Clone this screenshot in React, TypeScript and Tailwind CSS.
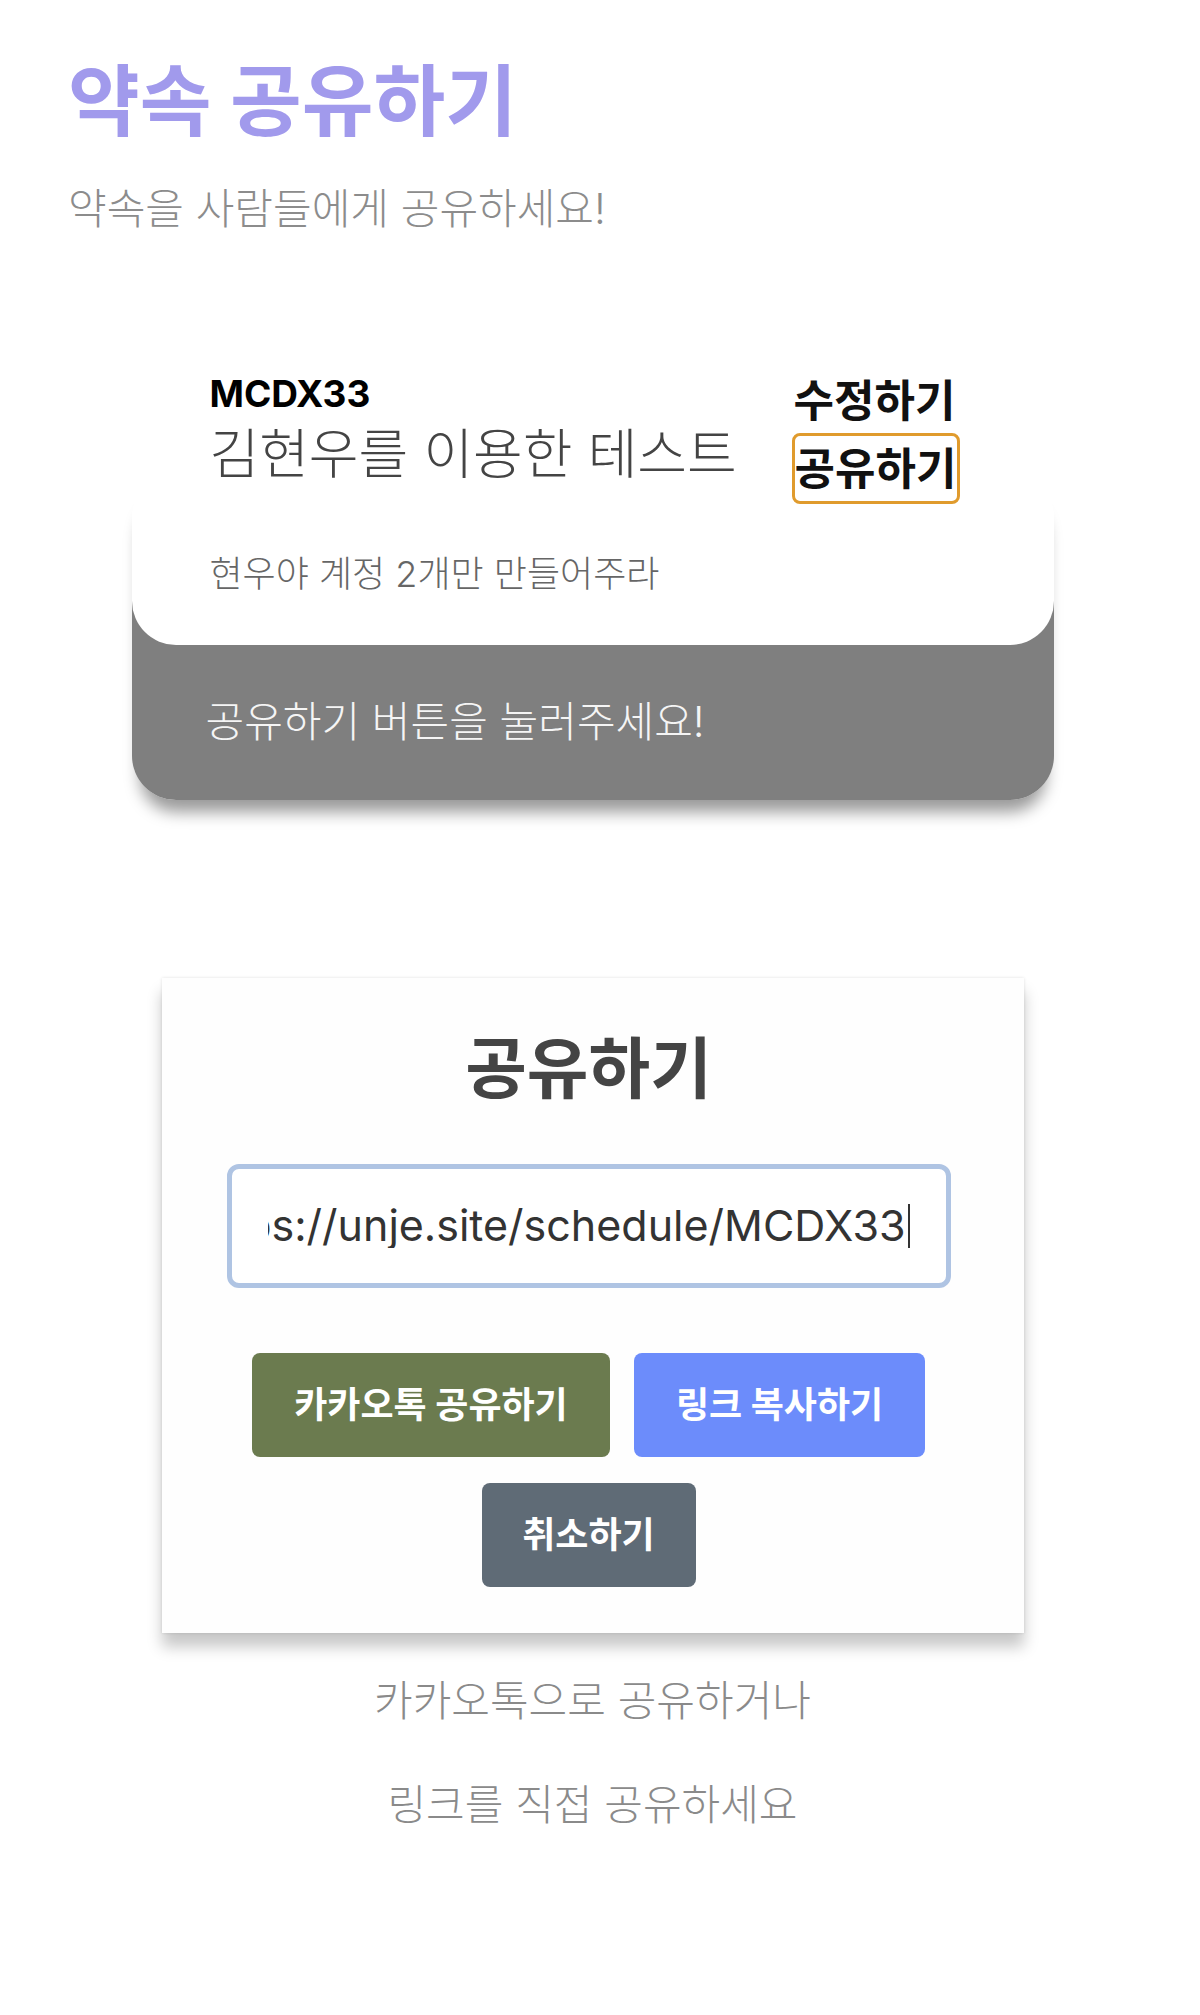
export default function App() {
  return (
    <div className="min-h-[2015px] bg-white font-['Inter','Noto_Sans_CJK_KR',sans-serif]">
      <div className="w-[1185px] pb-[100px]">
        <header className="pl-[68px] pt-[63px]">
          <h1 className="text-[78px] font-bold leading-none text-[#a19aec]">약속 공유하기</h1>
          <p className="mt-[47px] text-[42px] font-light leading-none text-[#8c8c8c]">약속을 사람들에게 공유하세요!</p>
        </header>

        <section className="mx-auto mt-[145px] w-[922px]">
          <div className="relative z-20 flex items-start justify-between pl-[78px] pr-[94px]">
            <div>
              <div className="text-[37px] font-bold leading-none text-black">MCDX33</div>
              <div className="mt-[16px] text-[54px] font-light leading-none text-[#444]">김현우를 이용한 테스트</div>
            </div>
            <div className="flex flex-col items-start pt-[4px]">
              <button className="pl-[2px] text-[44px] font-bold leading-none text-[#111]">수정하기</button>
              <button className="mt-[10px] flex h-[71px] items-center rounded-[8px] border-[3px] border-[#e09b2d] px-0 text-[44px] font-bold leading-none text-[#111]">
                공유하기
              </button>
            </div>
          </div>

          <div className="-mt-[31px] overflow-hidden rounded-[44px] bg-white shadow-[0_20px_16px_-8px_rgba(0,0,0,0.4)]">
            <div className="relative z-10 h-[172px] rounded-b-[44px] bg-white pl-[78px] pt-[83px]">
              <p className="text-[36px] font-light leading-none text-[#666]">현우야 계정 2개만 만들어주라</p>
            </div>
            <div className="-mt-[44px] h-[199px] bg-[#7f7f7f] pl-[74px] pt-[100px]">
              <p className="text-[42px] font-light leading-none text-[#f5f5f5]">공유하기 버튼을 눌러주세요!</p>
            </div>
          </div>
        </section>

        <section className="mx-auto mt-[178px] w-[862px] bg-[#fefefe] pb-[46px] pr-[8px] pt-[57px] shadow-[0_0_3px_rgba(0,0,0,0.12),0_14px_14px_rgba(0,0,0,0.22)]">
          <h2 className="text-center text-[67px] font-semibold leading-none text-[#444]">공유하기</h2>
          <div className="mx-auto mt-[62px] flex h-[124px] w-[724px] items-center rounded-[12px] border-[5px] border-[#afc4e3] bg-white px-[36px]">
            <div className="flex flex-1 justify-end overflow-hidden whitespace-nowrap">
              <span className="shrink-0 text-[43px] leading-none text-[#333]">https://unje.site/schedule/MCDX33</span>
              <span className="ml-[2px] h-[44px] w-[2px] shrink-0 bg-[#333]"></span>
            </div>
          </div>
          <div className="mt-[65px] flex justify-center gap-[24px]">
            <button className="h-[104px] w-[358px] rounded-[8px] bg-[#6b7b4f] text-[36px] font-bold leading-none text-white">카카오톡 공유하기</button>
            <button className="h-[104px] w-[291px] rounded-[8px] bg-[#6c8cfb] text-[36px] font-bold leading-none text-white">링크 복사하기</button>
          </div>
          <div className="mt-[26px] flex justify-center">
            <button className="h-[104px] w-[214px] rounded-[8px] bg-[#5f6b76] text-[36px] font-bold leading-none text-white">취소하기</button>
          </div>
        </section>

        <div className="mt-[47px] text-center text-[42px] font-light leading-none text-[#8a8a8a]">
          <p>카카오톡으로 공유하거나</p>
          <p className="mt-[62px]">링크를 직접 공유하세요</p>
        </div>
      </div>
    </div>
  );
}
